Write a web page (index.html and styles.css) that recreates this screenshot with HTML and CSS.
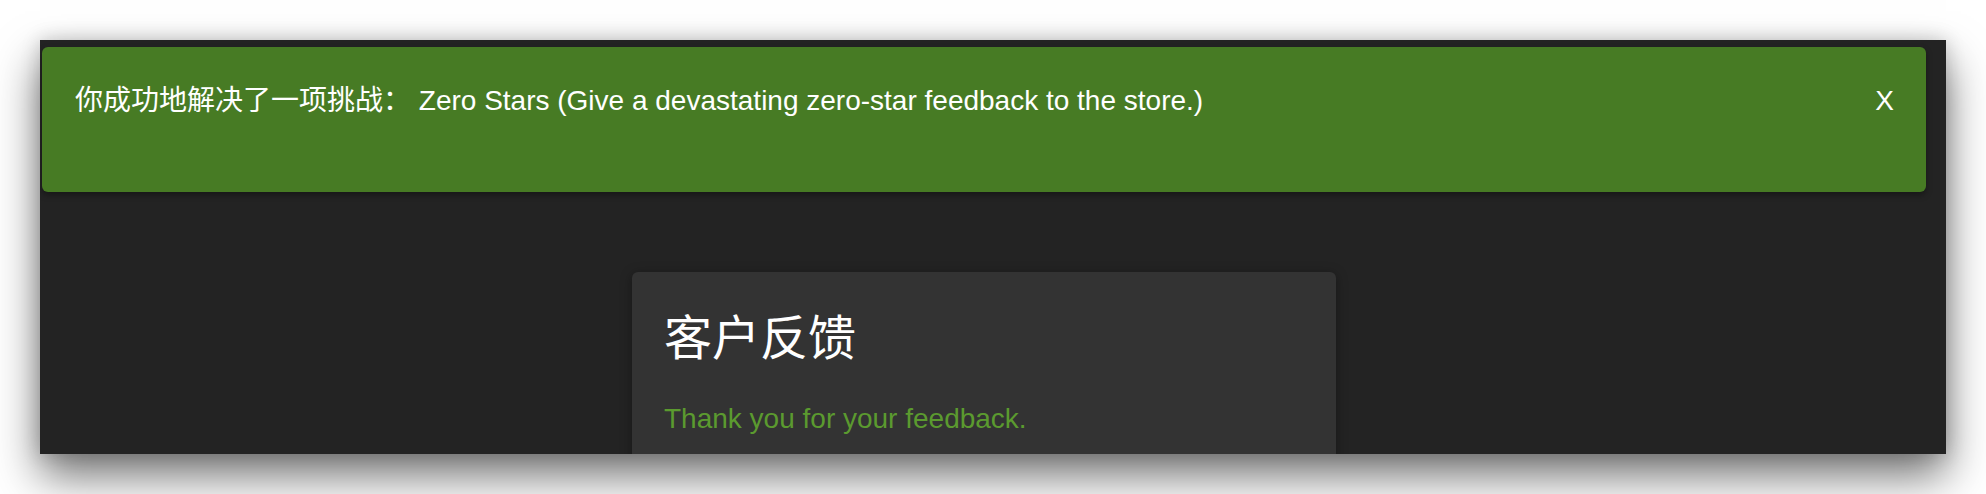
FILE: index.html
```html
<!DOCTYPE html>
<html lang="zh">
<head>
<meta charset="utf-8">
<title>客户反馈</title>
<link rel="stylesheet" href="styles.css">
</head>
<body>
<div class="window">
  <div class="content">
    <div class="banner">
      <span class="banner-text">你成功地解决了一项挑战： Zero Stars (Give a devastating zero-star feedback to the store.)</span>
      <span class="banner-close">X</span>
    </div>
    <div class="card">
      <h1 class="card-title">客户反馈</h1>
      <p class="card-msg">Thank you for your feedback.</p>
    </div>
  </div>
  <div class="gutter"></div>
</div>
</body>
</html>
```
FILE: styles.css
```css
html, body {
  margin: 0;
  padding: 0;
  background: #ffffff;
}
body {
  padding: 40px 40px 0 40px;
  height: 494px;
  box-sizing: border-box;
  overflow: hidden;
  font-family: "Liberation Sans", "Noto Sans CJK SC", sans-serif;
}
.window {
  width: 1906px;
  height: 414px;
  background: #232323;
  display: flex;
  overflow: hidden;
  box-shadow: 0 22px 42px rgba(0, 0, 0, 0.55), 0 0 18px rgba(0, 0, 0, 0.18);
}
.content {
  flex: 1;
  display: flex;
  flex-direction: column;
  align-items: center;
  min-width: 0;
}
.gutter {
  width: 18px;
  flex: none;
}
.banner {
  flex: none;
  align-self: stretch;
  margin: 7px 2px 0 2px;
  height: 145px;
  box-sizing: border-box;
  padding: 30px 32px 0 33px;
  background: #477b24;
  border-radius: 6px;
  box-shadow: 0 3px 6px rgba(0, 0, 0, 0.35);
  display: flex;
  align-items: flex-start;
  justify-content: space-between;
  color: #ffffff;
  font-size: 28px;
  line-height: 48px;
}
.banner-close {
  font-size: 28px;
}
.card {
  margin-top: 80px;
  width: 704px;
  flex: none;
  box-sizing: border-box;
  padding: 35px 32px 32px 32px;
  background: #333333;
  border-radius: 6px;
  box-shadow: 0 2px 12px rgba(0, 0, 0, 0.35);
}
.card-title {
  margin: 0;
  font-size: 48px;
  font-weight: 400;
  line-height: 64px;
  color: #ffffff;
}
.card-msg {
  margin: 28px 0 0 0;
  font-size: 28px;
  line-height: 40px;
  color: #5b9a2f;
}
```
